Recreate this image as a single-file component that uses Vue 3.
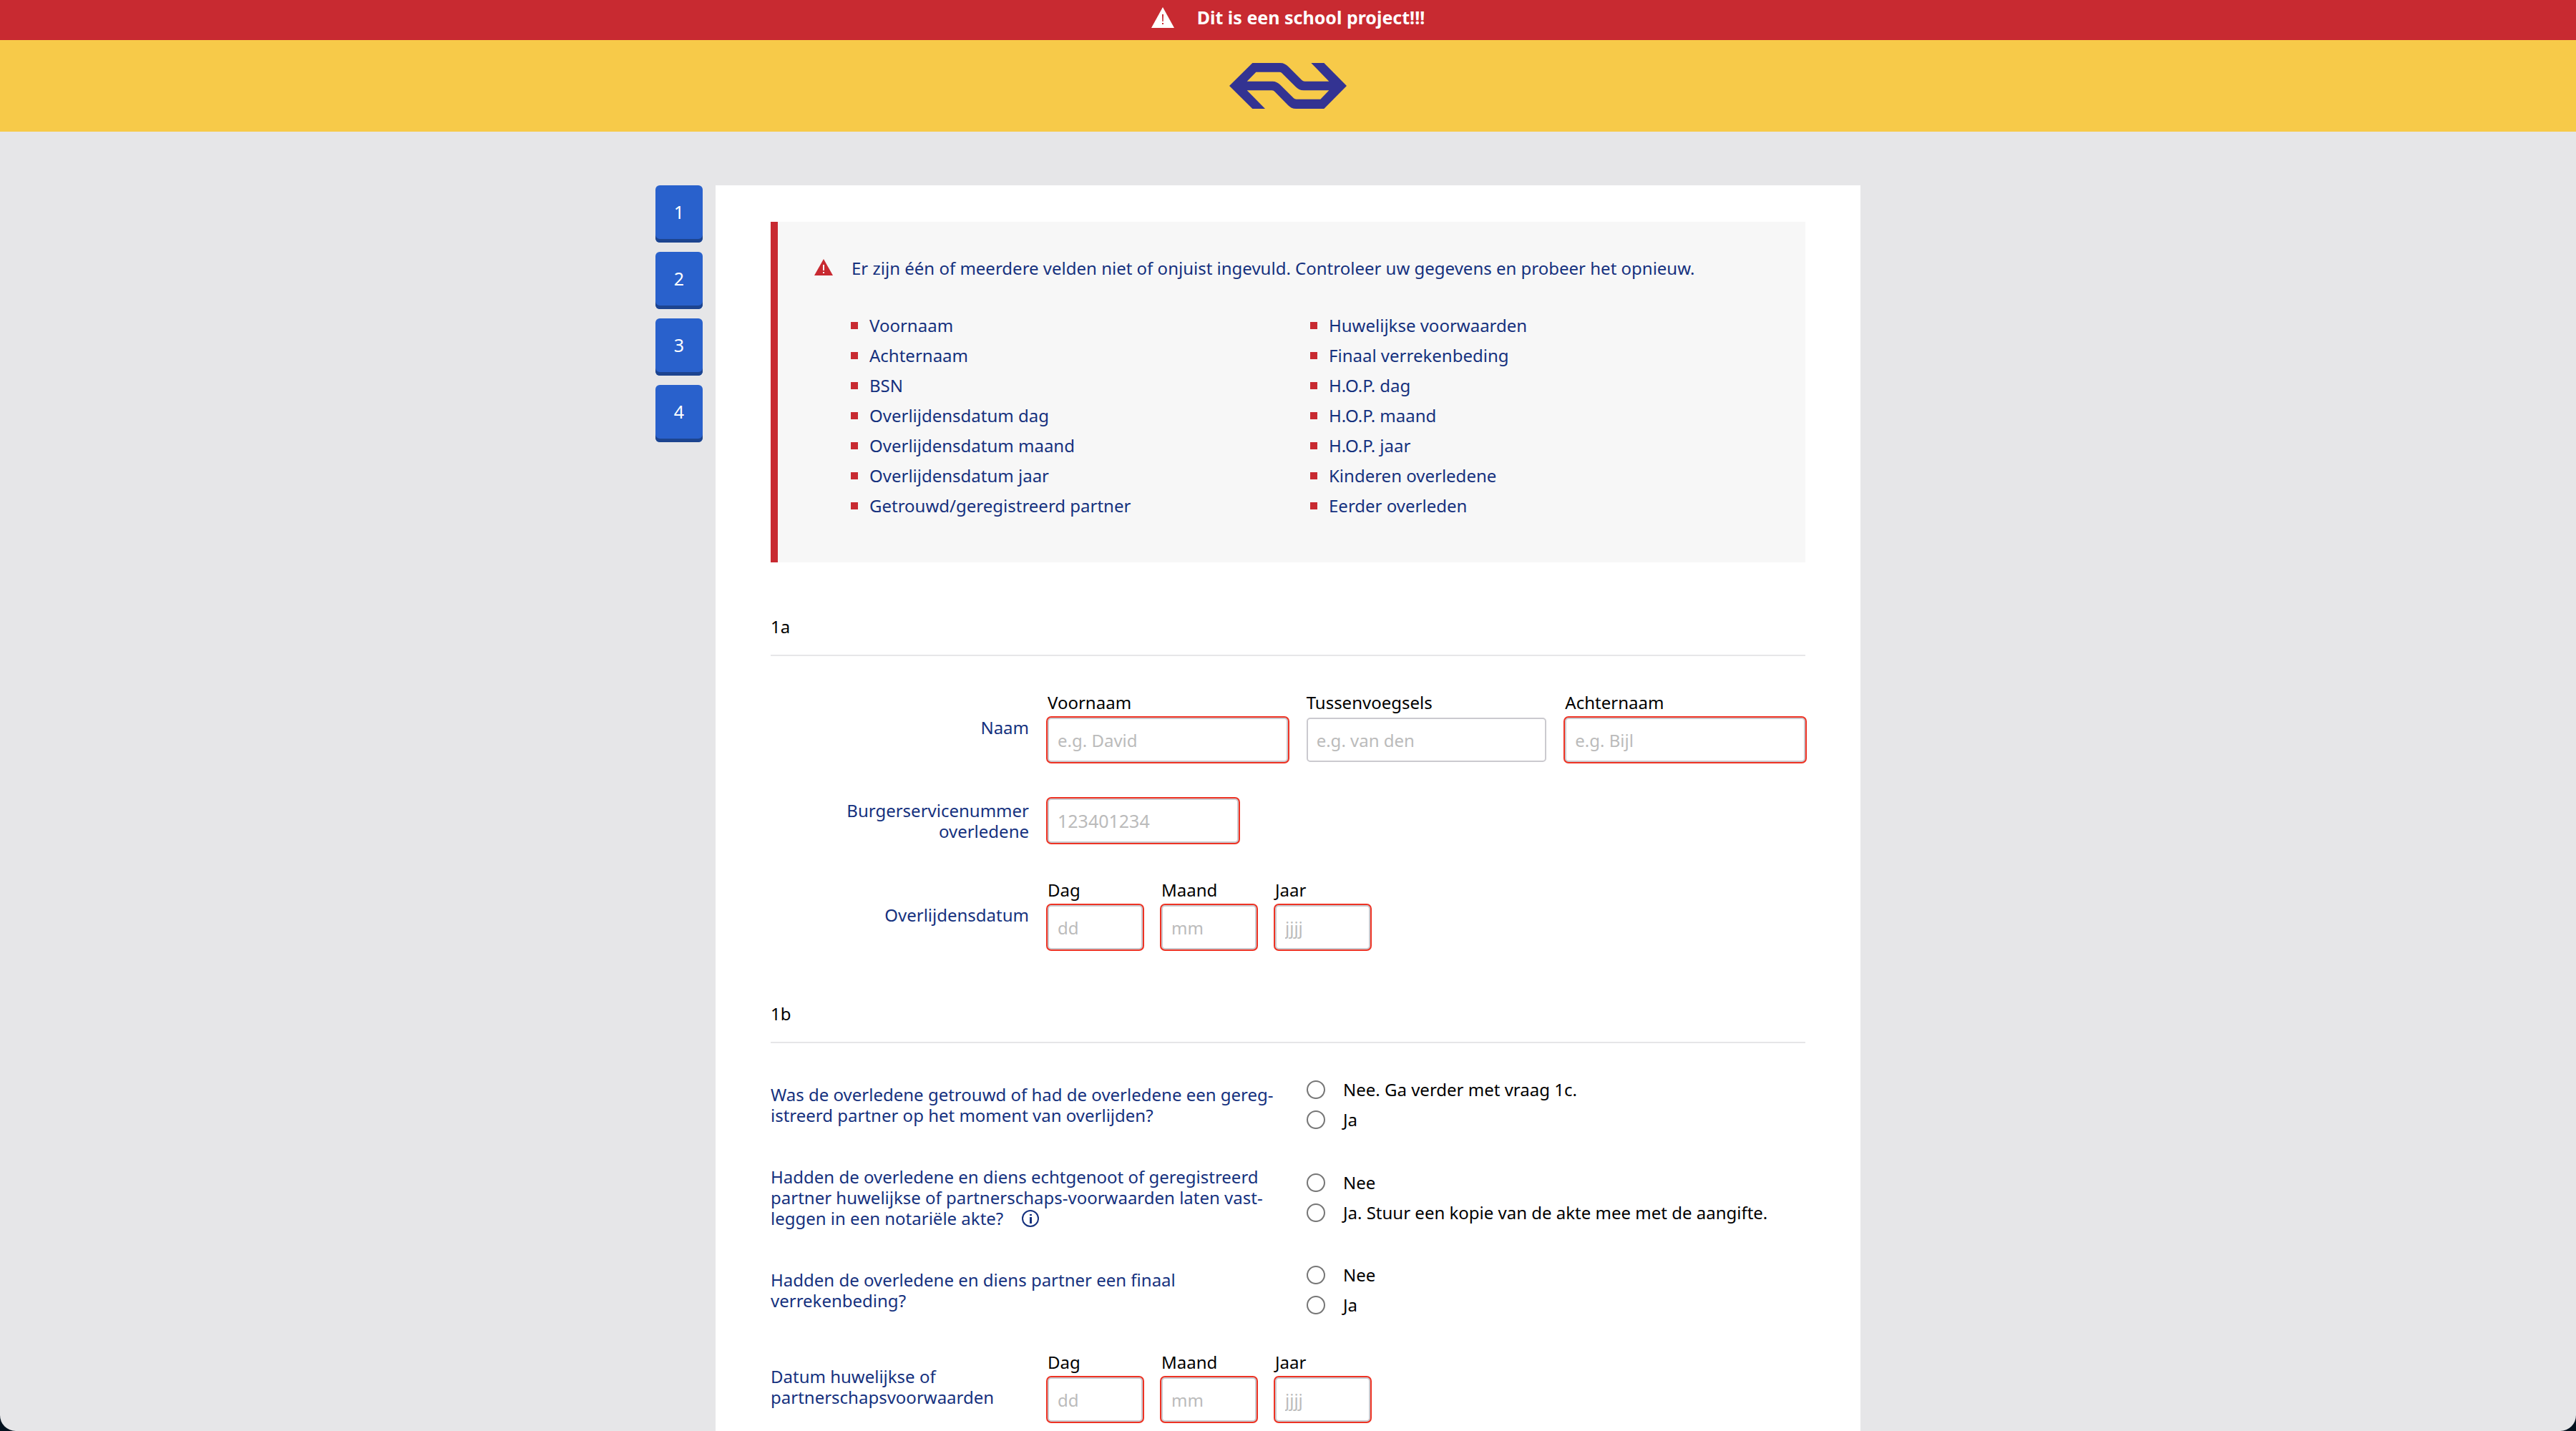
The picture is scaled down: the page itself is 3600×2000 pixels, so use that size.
<script setup>
const steps = [1, 2, 3, 4]

const errors = [
  'Voornaam',
  'Achternaam',
  'BSN',
  'Overlijdensdatum dag',
  'Overlijdensdatum maand',
  'Overlijdensdatum jaar',
  'Getrouwd/geregistreerd partner',
  'Huwelijkse voorwaarden',
  'Finaal verrekenbeding',
  'H.O.P. dag',
  'H.O.P. maand',
  'H.O.P. jaar',
  'Kinderen overledene',
  'Eerder overleden',
]

const nameFields = [
  { id: 'voornaam', label: 'Voornaam', placeholder: 'e.g. David', invalid: true },
  { id: 'tussenvoegsels', label: 'Tussenvoegsels', placeholder: 'e.g. van den', invalid: false },
  { id: 'achternaam', label: 'Achternaam', placeholder: 'e.g. Bijl', invalid: true },
]

const dateParts = [
  { id: 'dag', label: 'Dag', placeholder: 'dd' },
  { id: 'maand', label: 'Maand', placeholder: 'mm' },
  { id: 'jaar', label: 'Jaar', placeholder: 'jjjj' },
]

const questions = [
  {
    id: 'getrouwd',
    lines: [
      'Was de overledene getrouwd of had de overledene een gereg-',
      'istreerd partner op het moment van overlijden?',
    ],
    options: ['Nee. Ga verder met vraag 1c.', 'Ja'],
  },
  {
    id: 'voorwaarden',
    lines: [
      'Hadden de overledene en diens echtgenoot of geregistreerd',
      'partner huwelijkse of partnerschaps-voorwaarden laten vast-',
      'leggen in een notariële akte?',
    ],
    info: true,
    options: ['Nee', 'Ja. Stuur een kopie van de akte mee met de aangifte.'],
  },
  {
    id: 'verrekenbeding',
    lines: ['Hadden de overledene en diens partner een finaal', 'verrekenbeding?'],
    options: ['Nee', 'Ja'],
  },
]
</script>

<template>
  <div class="page">
    <div class="banner">
      <svg class="banner-icon" viewBox="0 0 32 29" aria-hidden="true">
        <path fill="#fff" d="M16 0 32 29H0Z" />
        <path fill="#c82a31" d="M15 10h2l-.3 10h-1.4ZM15 22h2v2h-2Z" />
      </svg>
      <strong>Dit is een school project!!!</strong>
    </div>

    <header class="header">
      <svg class="logo" viewBox="0 0 492 192" role="img" aria-label="NS">
        <path
          fill="#333392"
          fill-rule="evenodd"
          d="M0 96 97 0H213C228 0 238 6 247 15L304 72Q309 77 316 77H418L343 0H397L492 96 397 192H280C265 192 255 186 246 177L190 120Q185 115 178 115H74L150 192H97ZM112 38 74 77H180C195 77 205 83 214 92L270 148Q274 152 281 152H382L418 115H312C297 115 287 109 278 100L219 41Q216 38 210 38Z"
        />
      </svg>
    </header>

    <main class="main">
      <nav class="steps" aria-label="Stappen">
        <button v-for="step in steps" :key="step" type="button" class="step">{{ step }}</button>
      </nav>

      <form class="card" novalidate>
        <section class="alert">
          <div class="alert-title">
            <svg class="alert-icon" viewBox="0 0 26 23" aria-hidden="true">
              <path fill="#c82a31" d="M13 0 26 23H0Z" />
              <path fill="#f7f7f7" d="M12 8h2v8h-2ZM12 18h2v2h-2Z" />
            </svg>
            <p>
              Er zijn één of meerdere velden niet of onjuist ingevuld. Controleer uw gegevens en
              probeer het opnieuw.
            </p>
          </div>
          <ul class="alert-list">
            <li v-for="error in errors" :key="error">{{ error }}</li>
          </ul>
        </section>

        <h2>1a</h2>
        <div class="rows details">
          <div class="row">
            <span class="row-label">Naam</span>
            <div class="names">
              <div v-for="field in nameFields" :key="field.id" class="field">
                <label :for="field.id">{{ field.label }}</label>
                <input
                  :id="field.id"
                  type="text"
                  :class="{ invalid: field.invalid }"
                  :placeholder="field.placeholder"
                />
              </div>
            </div>
          </div>

          <div class="row">
            <label class="row-label" for="bsn">Burgerservicenummer<br />overledene</label>
            <input id="bsn" type="text" class="bsn invalid" placeholder="123401234" />
          </div>

          <div class="row">
            <span class="row-label">Overlijdensdatum</span>
            <div class="dates">
              <div v-for="part in dateParts" :key="part.id" class="field date">
                <label :for="`overlijden-${part.id}`">{{ part.label }}</label>
                <input
                  :id="`overlijden-${part.id}`"
                  type="text"
                  class="invalid"
                  :placeholder="part.placeholder"
                />
              </div>
            </div>
          </div>
        </div>

        <h2>1b</h2>
        <div class="rows questions">
          <div
            v-for="question in questions"
            :key="question.id"
            class="question"
            role="radiogroup"
            :aria-labelledby="`${question.id}-vraag`"
          >
            <p :id="`${question.id}-vraag`" class="question-text">
              <span v-for="line in question.lines" :key="line" class="line">
                {{ line }}
                <svg
                  v-if="question.info && line === question.lines[question.lines.length - 1]"
                  class="info"
                  viewBox="0 0 24 24"
                  aria-hidden="true"
                >
                  <circle cx="12" cy="12" r="11" fill="none" stroke="#15317e" stroke-width="2" />
                  <path fill="#15317e" d="M11 6h3v2h-3ZM11 10h3v9h-3Z" />
                </svg>
              </span>
            </p>
            <div class="options">
              <label v-for="option in question.options" :key="option" class="option">
                <input type="radio" :name="question.id" />
                {{ option }}
              </label>
            </div>
          </div>

          <div class="row">
            <span class="question-text">Datum huwelijkse of<br />partnerschapsvoorwaarden</span>
            <div class="dates">
              <div v-for="part in dateParts" :key="part.id" class="field date">
                <label :for="`huwelijk-${part.id}`">{{ part.label }}</label>
                <input
                  :id="`huwelijk-${part.id}`"
                  type="text"
                  class="invalid"
                  :placeholder="part.placeholder"
                />
              </div>
            </div>
          </div>
        </div>
      </form>
    </main>
  </div>
</template>

<style>
html {
  background: #04121f;
}

body {
  margin: 0;
}
</style>

<style scoped>
.page,
.page * {
  box-sizing: border-box;
}

.page {
  display: flex;
  flex-direction: column;
  min-height: 100vh;
  border-radius: 0 0 22px 22px;
  overflow: hidden;
  background: #e6e6e8;
  color: #000;
  font-family: "Noto Sans", "Open Sans", sans-serif;
  font-size: 24px;
  line-height: 29px;
}

.banner {
  display: flex;
  align-items: center;
  justify-content: center;
  gap: 32px;
  height: 56px;
  padding-bottom: 8px;
  background: #c82a31;
  color: #fff;
  font-size: 25px;
}

.banner-icon {
  width: 32px;
  height: 29px;
}

.header {
  display: flex;
  align-items: center;
  justify-content: center;
  height: 128px;
  background: #f7ca49;
}

.logo {
  width: 164px;
  height: 64px;
}

.main {
  flex: 1;
  display: grid;
  grid-template-columns: 1fr minmax(0, 1600px) 1fr;
  padding-top: 75px;
}

.steps {
  display: flex;
  flex-direction: column;
  align-items: flex-end;
  gap: 13px;
  padding-right: 18px;
}

.step {
  width: 66px;
  height: 80px;
  padding: 0 0 5px;
  border: 0;
  border-radius: 6px;
  background: #2961cc;
  box-shadow: inset 0 -5px 0 #1d448f;
  color: #fff;
  font: inherit;
  font-size: 25px;
}

.card {
  padding: 51px 77px 10px;
  background: #fff;
}

.alert {
  padding: 44px 50px 58px 51px;
  border-left: 10px solid #c82a31;
  background: #f7f7f7;
  color: #15317e;
  line-height: 42px;
}

.alert-title {
  display: flex;
  align-items: center;
  gap: 26px;
}

.alert-title p {
  margin: 0;
}

.alert-icon {
  flex: none;
  width: 26px;
  height: 23px;
  margin-bottom: 4px;
}

.alert-list {
  display: grid;
  grid-template-rows: repeat(7, auto);
  grid-template-columns: 1fr 1fr;
  grid-auto-flow: column;
  margin: 38px 0 0;
  padding: 0 0 0 51px;
  list-style: none;
}

.alert-list li {
  display: flex;
  align-items: center;
  gap: 16px;
}

.alert-list li::before {
  content: "";
  width: 10px;
  height: 10px;
  background: #c82a31;
}

h2 {
  margin: 69px 0 0;
  padding-bottom: 18px;
  border-bottom: 2px solid #e6e6e8;
  font-size: 24px;
  font-weight: 400;
  line-height: 42px;
}

.rows {
  display: flex;
  flex-direction: column;
}

.details {
  gap: 51px;
  padding-top: 50px;
}

.questions {
  gap: 44px;
  padding-top: 44px;
}

.row {
  display: grid;
  grid-template-columns: 361fr 1059fr;
  align-items: center;
  gap: 26px;
}

.row-label {
  color: #15317e;
  text-align: right;
}

.names {
  display: grid;
  grid-template-columns: repeat(3, 1fr);
  gap: 26px;
}

.dates {
  display: flex;
  gap: 26px;
}

.field {
  display: flex;
  flex-direction: column;
  gap: 7px;
}

.date {
  width: 133px;
}

input[type="text"] {
  width: 100%;
  height: 62px;
  padding: 0 12px;
  border: 2px solid #cbcacf;
  border-radius: 5px;
  background: #fff;
  color: #000;
  font: inherit;
}

input[type="text"].bsn {
  width: 267px;
  font-size: 25px;
}

input[type="text"].invalid {
  box-shadow: 0 0 0 2px #ee3324;
}

input::placeholder {
  color: #bbb;
  opacity: 1;
}

.question {
  display: grid;
  grid-template-columns: 723fr 697fr;
  align-items: center;
  gap: 26px;
}

.question-text {
  margin: 0;
  color: #15317e;
}

.line {
  display: flex;
  align-items: center;
  gap: 26px;
  white-space: nowrap;
}

.info {
  width: 24px;
  height: 24px;
}

.option {
  display: flex;
  align-items: center;
  gap: 25px;
  line-height: 42px;
}

.option input {
  appearance: none;
  width: 26px;
  height: 26px;
  margin: 0;
  border: 2px solid #767676;
  border-radius: 50%;
  background: #fff;
}
</style>
